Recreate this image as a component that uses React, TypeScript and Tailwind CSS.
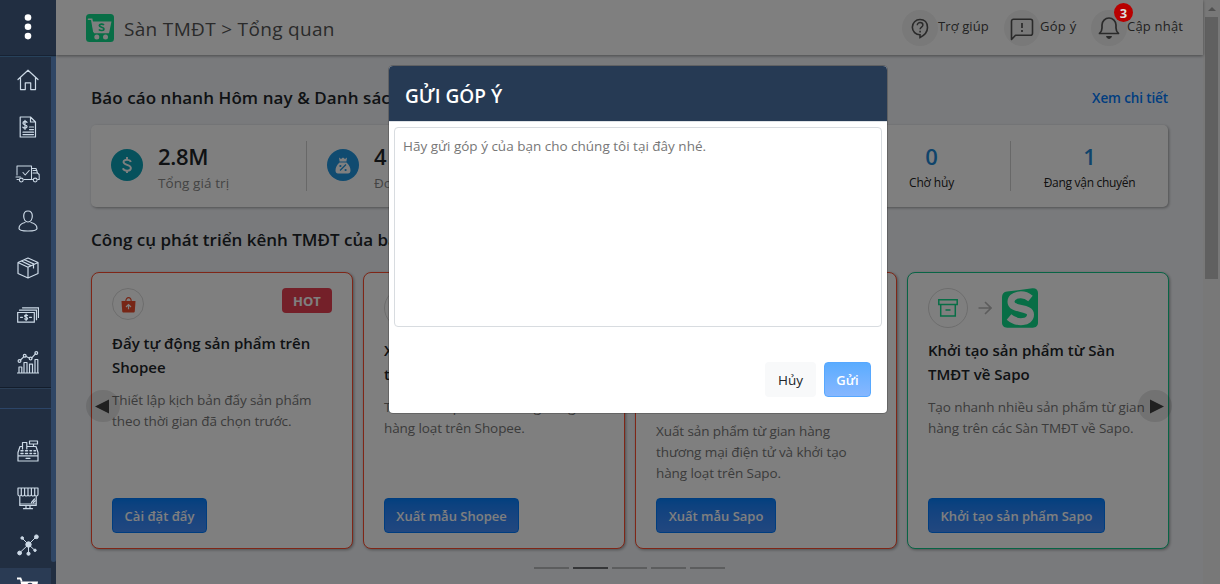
import React from "react";

type IconProps = { className?: string };

const stroke = {
  fill: "none",
  stroke: "currentColor",
  strokeWidth: 1.2,
  strokeLinejoin: "round" as const,
  strokeLinecap: "round" as const,
};

const HomeIcon = () => (
  <svg width="22" height="22" viewBox="0 0 22 22" {...stroke}>
    <path d="M1 10.5 11 1.2l10 9.3M3.5 8.600v12h4.800v-6.800h5.400v6.800h4.800v-12" />
  </svg>
);
const ReceiptIcon = () => (
  <svg width="22" height="22" viewBox="0 0 22 22" {...stroke}>
    <path d="M3.200 1h10.300l5 5v15H3.200zM13.500 1v5h5M12.500 11h4M12.500 13.600h4M6 16.200h10.500M6 18.600h10.500" />
    <path d="M10 6.300C9 5 5.900 5.200 6 7.200c.1 1.900 4 1.200 4 3.400 0 2-3.200 2-4.200.6M8 4.300v9" strokeWidth="1.300" />
  </svg>
);
const TruckIcon = () => (
  <svg width="25" height="18" viewBox="0 0 25 18" {...stroke} strokeWidth="1.050">
    <path d="M2 10V1h14.500v13.500H9M16.500 3.500h4.500l1.500 4.500 1.700 1.500v5h-1.500M17.500 14.500h-1M18 5.500h4M18 8h4.500M1 12h4.500M2 14.500h1.500M8 7.500l2.200 2.500 4-4.500" />
    <circle cx="6.300" cy="15" r="1.900" />
    <circle cx="20.200" cy="15" r="1.900" />
  </svg>
);
const UserIcon = () => (
  <svg width="20" height="22" viewBox="0 0 20 22" {...stroke}>
    <path d="M10 1c-3 0-4.300 2-4.300 5S7.300 12 10 12s4.300-3 4.300-6S13 1 10 1zM7 12.500c-3.500.8-6 2.500-6 6 0 1.700 4 2.500 9 2.500s9-.8 9-2.500c0-3.500-2.500-5.200-6-6" />
  </svg>
);
const BoxIcon = () => (
  <svg width="22" height="22" viewBox="0 0 22 22" {...stroke}>
    <path d="M11 1 21 5.500v11L11 21 1 16.500v-11zM1 5.500l10 4.700 10-4.700M11 10.200V21M7.500 2.700l9 4.200v4M4.500 4l9.300 4.600" />
  </svg>
);
const MoneyIcon = () => (
  <svg width="22" height="16" viewBox="0 0 22 16" {...stroke} strokeLinejoin="miter">
    <path d="M.7 5.500h16.600v9.600H.7zM2.500 3.200h17v9.500M5.500.8h16v9.700M3.500 10.300h2M12.500 10.300h2" />
    <path d="M10.600 8.500c-1-.8-3-.6-3 .6 0 1.400 3 .9 3 2.300 0 1.200-2 1.400-3 .5M9.100 7.200v6.200" />
  </svg>
);
const ChartIcon = () => (
  <svg width="22" height="23" viewBox="0 0 22 23" {...stroke}>
    <path d="M0 22h22M2 22v-6h2.800v6M7 22V11.500h3V22M12.500 22v-8.800h3V22M18 22V8.500h2.800V22M3.500 9l3.200-3.200M9 5.500l3.300 1.500M14.800 6.800l3.600-4" />
    <circle cx="2.500" cy="10" r="1.400" />
    <circle cx="7.700" cy="4.800" r="1.400" />
    <circle cx="13.600" cy="7.600" r="1.400" />
    <circle cx="19.300" cy="2" r="1.400" />
  </svg>
);
const RegisterIcon = () => (
  <svg width="22" height="22" viewBox="0 0 22 22" {...stroke}>
    <path d="M5 6.500H3L1 12.500V21h20v-8.500l-2-6h-8.500M1 15.800h20M5.500 9V2.500h4.300V9M12.500 1h8v3h-8zM16.500 4v2.500M9 18.300h4" />
    <path d="M4 10.800h2M8.500 10.800h2M13 10.800h1.500M17 10.800h1.500M4 13.400h2M8.500 13.400h2M13 13.400h1.500M17 13.400h1.500" strokeWidth="1.500" />
  </svg>
);
const StoreIcon = () => (
  <svg width="22" height="23" viewBox="0 0 22 23" {...stroke}>
    <path d="M1 1h20v6.500c0 2-3.300 2-3.300 0 0 2-3.300 2-3.300 0 0 2-3.400 2-3.400 0 0 2-3.400 2-3.400 0 0 2-3.300 2-3.300 0 0 2-3.300 2-3.300 0zM4.300 1v6.500M7.600 1v6.500M11 1v6.500M14.400 1v6.500M17.700 1v6.500M2.800 9.500v9h16.400v-9M2.800 17h16.400M9 18.500v2.800M13 18.500v2.800M6.500 21.700h9M14.500 15.500l3-3.500M16.500 15.500l1.500-1.700" />
  </svg>
);
const NetworkIcon = () => (
  <svg width="22" height="22" viewBox="0 0 22 22" stroke="currentColor" fill="currentColor" strokeWidth="1">
    <path d="M11.500 10.500 2.500 19M11.500 10.500 19.500 2.500M11.500 10.500 5 4M11.500 10.500v9M11.500 10.500l6.500 6" />
    <circle cx="11.500" cy="10.500" r="2.700" />
    <circle cx="2.600" cy="19" r="1.900" />
    <circle cx="19.400" cy="2.800" r="1.900" />
    <circle cx="5.200" cy="4" r="1.300" />
    <circle cx="11.500" cy="19.700" r="1.600" />
    <circle cx="18" cy="16.300" r="1.200" />
  </svg>
);
const CartIcon = ({ className }: IconProps) => (
  <svg width="24" height="22" viewBox="0 0 24 22" className={className}>
    <path d="M1 1.500h3.500l1.200 3" fill="none" stroke="currentColor" strokeWidth="1.800" />
    <path d="M4.500 4.500H22l-1.500 9H6.500z" fill="currentColor" />
    <circle cx="14" cy="8.500" r="2.800" fill="#2a3b54" />
  </svg>
);

const menu = [
  { icon: <HomeIcon />, box: "h-[47px]" },
  { icon: <ReceiptIcon />, box: "h-[47px]" },
  { icon: <TruckIcon />, box: "h-[47px]" },
  { icon: <UserIcon />, box: "h-[47px]" },
  { icon: <BoxIcon />, box: "h-[47px]" },
  { icon: <MoneyIcon />, box: "h-[47px]" },
  { icon: <ChartIcon />, box: "h-[48px]" },
];

const channels = [
  { icon: <RegisterIcon />, box: "h-[47px]" },
  { icon: <StoreIcon />, box: "h-[47px] pt-px" },
  { icon: <NetworkIcon />, box: "h-[47px]" },
];

function Sidebar() {
  return (
    <aside className="relative z-20 flex h-full w-14 shrink-0 flex-col overflow-hidden bg-[#212e41] text-[#ccd9e6]">
      <div className="flex h-[55px] shrink-0 items-center justify-center pb-[2px] pr-[1px]">
        <svg width="8" height="28" viewBox="0 0 8 28" fill="#fff">
          <circle cx="4" cy="4.500" r="3.300" />
          <circle cx="4" cy="13.800" r="3.300" />
          <circle cx="4" cy="23.100" r="3.300" />
        </svg>
      </div>
      <div className="h-px shrink-0 bg-[#172233]" />
      <div className="h-px shrink-0 bg-[#27415a]" />
      <div className="flex min-h-0 flex-1">
        <nav className="flex w-[51px] flex-col">
          {menu.map((m, i) => (
            <div key={i} className={`flex shrink-0 items-center justify-center pb-[2px] pl-[4px] ${m.box}`}>
              {m.icon}
            </div>
          ))}
          <div className="h-px shrink-0 bg-[#131d2b]" />
          <div className="h-px shrink-0 bg-[#2b3e55]" />
          <div className="h-[19px] shrink-0" />
          <div className="h-px shrink-0 bg-[#2c4568]" />
          <div className="h-[18px] shrink-0" />
          {channels.map((m, i) => (
            <div key={i} className={`flex shrink-0 items-center justify-center pl-[4px] ${m.box}`}>
              {m.icon}
            </div>
          ))}
          <div className="flex h-[47px] shrink-0 justify-center bg-[#2a3b54] pl-[4px] pt-[9px] text-white">
            <CartIcon />
          </div>
        </nav>
        <div className="h-[505px] w-[5px] rounded-b-sm bg-[#2f4665]" />
      </div>
    </aside>
  );
}

function CartLogo() {
  return (
    <svg width="28" height="28" viewBox="0 0 28 28">
      <rect width="28" height="28" rx="3.500" fill="#10dc8c" />
      <path d="M2.500 5.200h3.200l2.200 12.300" fill="none" stroke="#fff" strokeWidth="1.600" strokeLinecap="round" />
      <path d="M5.800 7.500H25.500L23 19.200H8z" fill="#fff" />
      <circle cx="10.800" cy="23" r="2.500" fill="#fff" />
      <circle cx="19.500" cy="23" r="2.500" fill="#fff" />
      <path d="M18 11c-1.300-1.400-4.700-1.300-4.700.6 0 2 4.700 1.200 4.700 3.300 0 1.900-3.600 2.100-5.200.6" fill="none" stroke="#10dc8c" strokeWidth="1.700" />
    </svg>
  );
}

function TopBar() {
  return (
    <header className="relative flex h-[55px] shrink-0 items-center bg-white pl-[30px] shadow-[0_1px_3px_rgba(0,0,0,0.4)]">
      <CartLogo />
      <h1 className="ml-[10px] mt-[3px] flex-1 text-[19px] tracking-[0.320px] text-[#555]">Sàn TMĐT &gt; Tổng quan</h1>
      <div className="flex h-9 w-9 items-center justify-center rounded-full bg-[#f2f2f2] text-[#555]">
        <svg width="20" height="22" viewBox="0 0 20 22" fill="none" stroke="currentColor" strokeWidth="1.600">
          <path d="M10 17.800V20.500c4-2 7.500-5.500 7.500-10C17.500 5.500 14.500 2.500 10 2.500a7.600 7.600 0 0 0 0 15.300z" />
          <path d="M7.300 8.200c0-3.600 5.600-3.300 5.600-.2 0 2-2.800 2.100-2.800 4.300M10.100 13.800v1.600" strokeWidth="1.500" />
        </svg>
      </div>
      <span className="w-[66px] whitespace-nowrap pb-[2px] text-[13px] tracking-[0.100px] text-[#444]">Trợ giúp</span>
      <div className="flex h-9 w-9 items-center justify-center rounded-full bg-[#f2f2f2] text-[#555]">
        <svg width="24" height="24" viewBox="0 0 24 24" fill="none" stroke="currentColor" strokeWidth="1.600" strokeLinejoin="round" className="mt-[2px]">
          <path d="M1.500 22.500V4.200a2 2 0 0 1 2-2h17a2 2 0 0 1 2 2v12a2 2 0 0 1-2 2H5.500z" />
          <path d="M12 6v5M12 13v2" strokeWidth="1.700" />
        </svg>
      </div>
      <span className="w-[51px] whitespace-nowrap pb-[2px] text-[13px] tracking-[0.300px] text-[#444]">Góp ý</span>
      <div className="flex h-9 w-9 items-center justify-center rounded-full bg-[#f2f2f2] text-[#555]">
        <svg width="22" height="24" viewBox="0 0 22 24" fill="none" stroke="currentColor" strokeWidth="1.700" strokeLinejoin="round">
          <path d="M1.500 17.500c2-1.600 2.500-3 2.500-5.500V9a7 7 0 0 1 14 0v3c0 2.500.5 3.900 2.500 5.500z" />
          <path d="M8.500 20.500a2.600 2.600 0 0 0 5 0z" fill="currentColor" strokeWidth="1" />
        </svg>
      </div>
      <span className="w-[76px] whitespace-nowrap pb-[2px] text-[13px] tracking-[0.200px] text-[#444]">Cập nhật</span>
    </header>
  );
}

function Stats() {
  return (
    <section className="mr-px flex h-[82px] items-start rounded-[5px] bg-white pt-4 shadow-[1px_1px_3px_rgba(0,0,0,0.35)]">
      <div className="flex h-[50px] w-[216px] border-r border-[#d0d0d0] pl-5">
        <div className="mt-[8px] flex h-8 w-8 items-center justify-center rounded-full bg-[#0da2b8]">
          <svg width="12" height="18" viewBox="0 0 12 18" fill="none" stroke="#fff" strokeWidth="1.900">
            <path d="M9.800 6C9.300 3.200 2.500 3 2.500 6c0 3.300 7.400 2.300 7.400 6 0 3.600-7.200 3.500-7.900.3M6 1v2.500M6 14.500V17" />
          </svg>
        </div>
        <div className="ml-[15px]">
          <div className="h-[30px] text-[22px] font-semibold leading-[30px] tracking-[-0.300px] text-[#212529]">2.8M</div>
          <div className="mt-[1px] text-[13.5px] leading-[22px] tracking-[0.080px] text-[#888]">Tổng giá trị</div>
        </div>
      </div>
      <div className="flex h-[50px] flex-1 pl-5">
        <div className="mt-[8px] flex h-8 w-8 items-center justify-center rounded-full bg-[#2196e0]">
          <svg width="16" height="17" viewBox="0 0 16 17">
            <path d="M4 .5 6 2l2-1.500L10 2l2-1.500-.6 4H4.600zM4.500 5.500h7c2.500 2 4 5 4 8 0 2-1 3-2.500 3H3c-1.500 0-2.500-1-2.500-3 0-3 1.500-6 4-8z" fill="#fff" />
            <path d="m5 13.500 6-6" stroke="#2196e0" strokeWidth="1.300" />
            <circle cx="5.400" cy="9" r="1.100" fill="#2196e0" />
            <circle cx="10.600" cy="13" r="1.100" fill="#2196e0" />
          </svg>
        </div>
        <div className="ml-[15px]">
          <div className="h-[30px] text-[22px] font-semibold leading-[30px] text-[#212529]">4</div>
          <div className="mt-[1px] text-[13.5px] leading-[22px] text-[#888]">Đơn hàng</div>
        </div>
      </div>
      <div className="h-[50px] w-[158px] border-r border-[#d0d0d0] text-center">
        <div className="h-[30px] text-[22px] font-semibold leading-[31px] text-[#1e88d6]">0</div>
        <div className="mt-[1px] text-[12px] leading-[22px] tracking-[-0.150px] text-[#222]">Chờ hủy</div>
      </div>
      <div className="h-[50px] w-[157px] text-center">
        <div className="h-[30px] text-[22px] font-semibold leading-[31px] text-[#1e88d6]">1</div>
        <div className="mt-[1px] text-[12px] leading-[22px] tracking-[-0.300px] text-[#222]">Đang vận chuyển</div>
      </div>
    </section>
  );
}

const ShopeeBag = () => (
  <svg width="15" height="17" viewBox="0 0 15 17">
    <path d="M4.800 5.500C4.800.3 10.200.3 10.200 5.500" fill="none" stroke="#ee4d2d" strokeWidth="1.200" />
    <path d="M.5 5h14l-.7 10.200c-.1.800-.6 1.300-1.400 1.300H2.600c-.8 0-1.300-.5-1.400-1.300z" fill="#ee4d2d" />
    <path d="M7.500 13.200V9.500M5 11l2.500-2.500L10 11" fill="none" stroke="#fff" strokeWidth="1.200" />
  </svg>
);

const ArchiveIcon = () => (
  <svg width="20" height="18" viewBox="0 0 20 18" fill="none" stroke="#10dc8c" strokeWidth="1.500">
    <path d="M.8.800h18.400v4.600H.8zM2.700 5.400v11.700h14.600V5.400M7.500 11h5" />
  </svg>
);

const SapoLogo = () => (
  <svg width="36" height="40" viewBox="0 0 36 40">
    <path d="M5 3.600 30.500.3C34 .1 36 2 36 5v29.500c0 3.200-2 5.200-5.200 5.200H5.200C2 39.700 0 37.700 0 34.500V9.300C0 6 1.800 4 5 3.600z" fill="#10dc8c" />
    <path d="M28.500 10.500C21 4.300 9 6.500 9 14c0 8.500 19.500 4.500 19.500 12.500 0 8.500-13.500 9.500-21.500 2.500" fill="none" stroke="#fff" strokeWidth="7" />
  </svg>
);

type Card = {
  title: string[];
  text: string[];
  action: string;
  width: string;
  kind: "hot" | "shopee" | "sapo";
};

const cards: Card[] = [
  {
    title: ["Đẩy tự động sản phẩm trên", "Shopee"],
    text: ["Thiết lập kịch bản đẩy sản phẩm", "theo thời gian đã chọn trước."],
    action: "Cài đặt đẩy",
    width: "w-[95px]",
    kind: "hot",
  },
  {
    title: ["Xuất mẫu sản phẩm", "trên Shopee"],
    text: ["Tải file sản phẩm và đăng hàng", "hàng loạt trên Shopee."],
    action: "Xuất mẫu Shopee",
    width: "w-[135px]",
    kind: "shopee",
  },
  {
    title: ["Xuất mẫu sản phẩm", "từ gian hàng", "về Sapo"],
    text: ["Xuất sản phẩm từ gian hàng", "thương mại điện tử và khởi tạo", "hàng loạt trên Sapo."],
    action: "Xuất mẫu Sapo",
    width: "w-[120px]",
    kind: "shopee",
  },
  {
    title: ["Khởi tạo sản phẩm từ Sàn", "TMĐT về Sapo"],
    text: ["Tạo nhanh nhiều sản phẩm từ gian", "hàng trên các Sàn TMĐT về Sapo."],
    action: "Khởi tạo sản phẩm Sapo",
    width: "w-[177px]",
    kind: "sapo",
  },
];

function ToolCard({ card }: { card: Card }) {
  const border = card.kind === "sapo" ? "border-[#10c88a]" : "border-[#ff4d2e]";
  return (
    <article
      className={`flex h-[277px] w-[262px] shrink-0 flex-col rounded-[8px] border bg-white px-5 pb-[15px] pt-[15px] shadow-[1px_1px_3px_rgba(0,0,0,0.35)] ${border}`}
    >
      {card.kind === "hot" ? (
        <div className="flex h-[33px] shrink-0 items-start justify-between">
          <div className="flex h-8 w-8 items-center justify-center rounded-full border border-[#dadada]">
            <ShopeeBag />
          </div>
          <div className="flex h-[25px] w-[50px] items-center justify-center rounded-[4px] bg-[#e84152] pt-[2px] text-[13px] font-bold text-white">
            HOT
          </div>
        </div>
      ) : (
        <div className="flex h-10 shrink-0 items-center">
          <div className="flex h-10 w-10 items-center justify-center rounded-full border border-[#dadada]">
            {card.kind === "sapo" ? <ArchiveIcon /> : <ShopeeBag />}
          </div>
          {card.kind === "sapo" && (
            <>
              <svg width="14" height="14" viewBox="0 0 14 14" className="mb-px ml-[10px] mr-[10px]" fill="none" stroke="#b8b8b8" strokeWidth="1.600">
                <path d="M.5 7h12M7 1l6 6-6 6" />
              </svg>
              <SapoLogo />
            </>
          )}
        </div>
      )}
      <h3 className="mt-[10px] shrink-0 whitespace-nowrap text-[15px] font-semibold leading-6 text-[#212529]">
        {card.title.map((l) => (
          <div key={l}>{l}</div>
        ))}
      </h3>
      <p className="mt-[11px] shrink-0 whitespace-nowrap text-[13.5px] leading-[21px] tracking-[-0.090px] text-[#777]">
        {card.text.map((l) => (
          <span key={l} className="block">
            {l}
          </span>
        ))}
      </p>
      <button
        className={`mt-auto h-[35px] shrink-0 whitespace-nowrap rounded-[4px] border border-[#007bff] bg-linear-to-b from-[#0481ff] to-[#438fff] pt-[2px] text-[13px] font-semibold text-white ${card.width}`}
      >
        {card.action}
      </button>
    </article>
  );
}

function Arrow({ side }: { side: "left" | "right" }) {
  return (
    <div
      className={`absolute top-[118px] flex h-8 w-[34px] items-center justify-center rounded-full bg-black/10 ${
        side === "left" ? "-left-[5px]" : "-right-[3px]"
      }`}
    >
      <svg width="14" height="15" viewBox="0 0 14 15" fill="#404040" className={side === "left" ? "-ml-[3px]" : "ml-[3px]"}>
        <path d={side === "left" ? "M14 .5v14L0 7.500z" : "M0 .5v14L14 7.500z"} />
      </svg>
    </div>
  );
}

function FeedbackDialog() {
  return (
    <div className="absolute left-[389px] top-[66px] z-30 flex h-[347px] w-[498px] flex-col rounded-[4px] bg-white shadow-[0_0_0_1px_rgba(0,0,0,0.2)]">
      <div className="flex h-[55px] items-center rounded-t-[4px] bg-[#263a54] pl-4 pt-[5px]">
        <h2 className="text-[19px] font-semibold tracking-[0.060px] text-white">GỬI GÓP Ý</h2>
      </div>
      <div className="h-px bg-[#dee2e6]" />
      <textarea
        className="mx-[5px] mt-[5px] block h-[200px] resize-none rounded-[4px] border border-[#d8dce0] bg-white px-2 py-[8px] text-[13.5px] leading-[20px] outline-none placeholder:text-[#777]"
        placeholder="Hãy gửi góp ý của bạn cho chúng tôi tại đây nhé."
      />
      <div className="mb-4 mr-4 mt-auto flex justify-end gap-2">
        <button className="h-[35px] w-[51px] rounded-[4px] bg-[#f8f9fa] pt-[2px] text-[13.5px] text-[#212529]">Hủy</button>
        <button className="h-[35px] w-[47px] rounded-[4px] border border-[#57a8ff] bg-linear-to-b from-[#5aacff] to-[#86b7ff] pt-[2px] text-[13px] font-semibold text-white">
          Gửi
        </button>
      </div>
    </div>
  );
}

export default function App() {
  return (
    <div className="relative flex h-[584px] w-[1220px] overflow-hidden bg-[#f3f5f9] font-['Open_Sans','Noto_Sans',sans-serif]">
      <Sidebar />
      <main className="flex w-[1147px] shrink-0 flex-col">
        <TopBar />
        <div className="flex flex-col pl-[35px] pr-[34px]">
          <div className="mt-[30px] flex h-[26px] items-center justify-between">
            <h2 className="whitespace-nowrap text-[17px] font-semibold tracking-[0.080px] text-[#212529]">Báo cáo nhanh Hôm nay &amp; Danh sách</h2>
            <a className="mr-px text-[13.5px] font-semibold tracking-[-0.120px] text-[#007bff]">Xem chi tiết</a>
          </div>
          <div className="mt-[14px]">
            <Stats />
          </div>
          <h2 className="mt-[20px] h-[26px] whitespace-nowrap text-[17px] font-semibold leading-[26px] text-[#212529]">
            Công cụ phát triển kênh TMĐT của bạn
          </h2>
          <div className="relative mt-[19px] flex gap-[10px]">
            {cards.map((c) => (
              <ToolCard key={c.action} card={c} />
            ))}
            <Arrow side="left" />
            <Arrow side="right" />
          </div>
          <div className="mr-[2px] mt-[18px] flex justify-center gap-1">
            {[0, 1, 2, 3, 4].map((i) => (
              <span key={i} className={`h-[2px] w-[35px] ${i === 1 ? "bg-[#6a6c70]" : "bg-[#b8babd]"}`} />
            ))}
          </div>
        </div>
      </main>
      <div className="flex w-[17px] shrink-0 flex-col items-center bg-[#f1f1f1]">
        <div className="flex h-[17px] items-center justify-center">
          <svg width="8" height="4" viewBox="0 0 8 4" fill="#a3a3a3">
            <path d="M4 0 8 4H0z" />
          </svg>
        </div>
        <div className="h-[262px] w-[13px] bg-[#c1c1c1]" />
      </div>
      <div className="absolute inset-0 z-10 bg-black/50" />
      <span className="absolute left-[1114px] top-[3px] z-20 flex h-[19px] w-[19px] items-center justify-center rounded-full bg-[#b80000] pt-[2px] text-[13px] font-bold text-[#ddd]">
        3
      </span>
      <FeedbackDialog />
    </div>
  );
}
